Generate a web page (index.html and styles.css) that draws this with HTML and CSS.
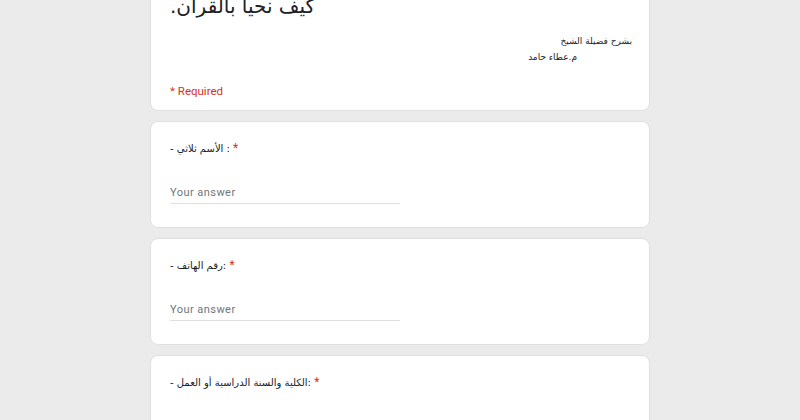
FILE: index.html
```html
<!DOCTYPE html>
<html lang="en">
<head>
    <meta charset="UTF-8">
    <meta name="viewport" content="width=device-width, initial-scale=1.0">
    <title>كيف نحيا بالقرآن.</title>
    <link rel="stylesheet" href="styles.css">
</head>
<body>
    <div class="form-container">
        <div class="card header-card">
            <div class="form-title" dir="auto">كيف نحيا بالقرآن.</div>
            <div class="form-desc" dir="rtl">
                <div>بشرح فضيلة الشيخ</div>
                <div class="indent">م.عطاء حامد</div>
            </div>
            <div class="required-note">* Required</div>
        </div>

        <div class="card question">
            <div class="q-title">- الأسم ثلاثي : <span class="star">*</span></div>
            <div class="answer">Your answer</div>
        </div>

        <div class="card question">
            <div class="q-title">- رقم الهاتف: <span class="star">*</span></div>
            <div class="answer">Your answer</div>
        </div>

        <div class="card question">
            <div class="q-title">- الكلية والسنة الدراسية أو العمل: <span class="star">*</span></div>
            <div class="answer">Your answer</div>
        </div>
    </div>
</body>
</html>
```

FILE: styles.css
```css
/* Page */
body {
    margin: 0;
    padding: 0;
    background: #ebebeb;
    font-family: Roboto, "DejaVu Sans", Arial, sans-serif;
    color: #202124;
    overflow: hidden;
}

.form-container {
    width: 500px;
    margin: -34px auto 0;
    display: flex;
    flex-direction: column;
    gap: 10px;
}

/* Cards */
.card {
    background: #ffffff;
    border: 1px solid #e0e0e0;
    border-radius: 8px;
    padding: 16px 20px 23px 19px;
}

.header-card {
    padding: 24px 20px 11px 19px;
}

.form-title {
    font-family: "DejaVu Sans", sans-serif;
    font-size: 20px;
    line-height: 30px;
    text-align: left;
    unicode-bidi: plaintext;
    color: #202124;
}

.form-desc {
    margin-top: 12px;
    margin-right: -3px;
    font-family: "DejaVu Sans", sans-serif;
    font-size: 9px;
    line-height: 16px;
    color: #202124;
}

.form-desc .indent {
    margin-right: 55px;
}

.required-note {
    margin-top: 18px;
    font-size: 11.5px;
    line-height: 16px;
    color: #d93025;
}

/* Questions */
.q-title {
    font-family: "DejaVu Sans", sans-serif;
    font-size: 10px;
    line-height: 20px;
    color: #202124;
}

.star {
    color: #d93025;
    font-family: Roboto, sans-serif;
    font-size: 12px;
}

.answer {
    margin-top: 24px;
    width: 230px;
    height: 20px;
    line-height: 20px;
    font-size: 11px;
    letter-spacing: 0.45px;
    color: #70757a;
    border-bottom: 1px solid #e0e0e0;
}
```
